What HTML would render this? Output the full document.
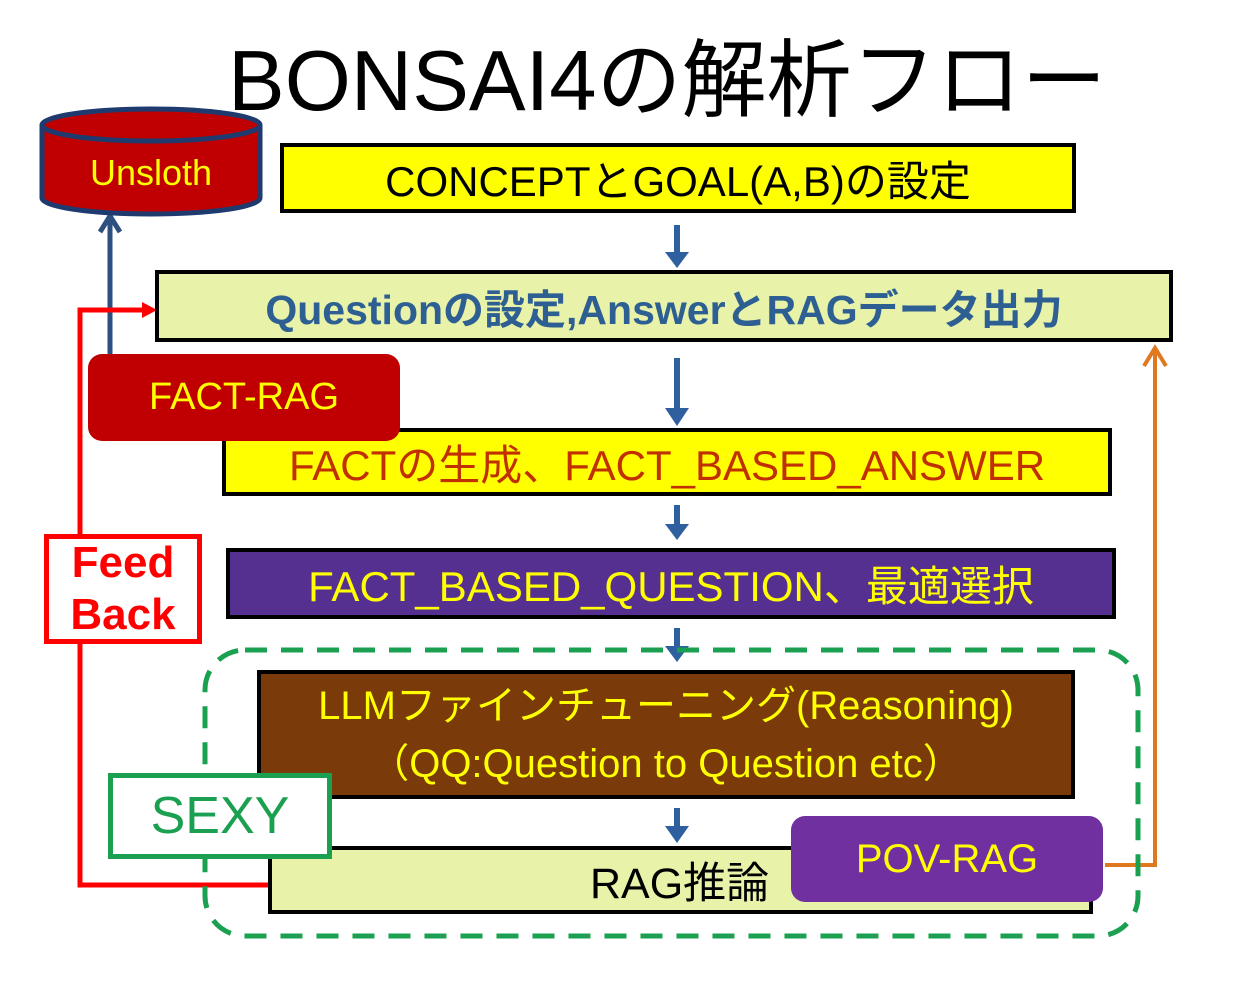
<!DOCTYPE html>
<html><head><meta charset="utf-8"><style>
body{margin:0;width:1256px;height:987px;background:#fff;position:relative;overflow:hidden;font-family:"Liberation Sans","Noto Sans CJK JP",sans-serif}
.a{position:absolute;box-sizing:border-box;display:flex;align-items:center;justify-content:center;white-space:nowrap}
</style></head><body>
<svg width="1256" height="987" style="position:absolute;left:0;top:0">
<g stroke="#2e5f9e" stroke-width="6" fill="#2e5f9e">
<line x1="677" y1="225" x2="677" y2="255"/><polygon points="665,252 689,252 677,268" stroke="none"/>
<line x1="677" y1="358" x2="677" y2="410"/><polygon points="665,408 689,408 677,426" stroke="none"/>
<line x1="677" y1="505" x2="677" y2="526"/><polygon points="665,524 689,524 677,540" stroke="none"/>
<line x1="677" y1="628" x2="677" y2="648"/><polygon points="665,646 689,646 677,662" stroke="none"/>
<line x1="677" y1="808" x2="677" y2="828"/><polygon points="665,826 689,826 677,843" stroke="none"/>
</g>
<line x1="110" y1="356" x2="110" y2="216" stroke="#2e5080" stroke-width="5"/>
<polyline points="100,232 110,216 120,232" fill="none" stroke="#2e5080" stroke-width="5"/>
<polyline points="276,885 80,885 80,310 148,310" fill="none" stroke="#f00" stroke-width="5"/>
<polygon points="142,302 157,310 142,318" fill="#f00"/>
<polyline points="1105,865 1155,865 1155,352" fill="none" stroke="#e07820" stroke-width="4"/>
<polyline points="1144,366 1155,348 1166,366" fill="none" stroke="#e07820" stroke-width="4"/>
<path d="M42,125 L42,198 A109,16 0 0 0 260,198 L260,125" fill="#c00000" stroke="#1f3a6e" stroke-width="5"/>
<ellipse cx="151" cy="125" rx="109" ry="16" fill="#c00000" stroke="#1f3a6e" stroke-width="5"/>
</svg>
<div style="position:absolute;left:228px;top:32px;font-size:85px;line-height:100px;color:#000">BONSAI4の解析フロー</div>
<div class="a" style="left:42px;top:150px;width:218px;height:46px;color:#ffff00;font-size:36px">Unsloth</div>
<div class="a" style="left:280px;top:143px;width:796px;height:70px;background:#ffff00;border:4px solid #000;font-size:42px">CONCEPTとGOAL(A,B)の設定</div>
<div class="a" style="left:155px;top:270px;width:1018px;height:72px;background:#e8f2a8;border:4px solid #000;font-size:41px;color:#2e5f93;font-weight:bold">Questionの設定,AnswerとRAGデータ出力</div>
<div class="a" style="left:222px;top:428px;width:890px;height:68px;background:#ffff00;border:4px solid #000;font-size:42px;color:#c03000">FACTの生成、FACT_BASED_ANSWER</div>
<div class="a" style="left:88px;top:354px;width:312px;height:87px;background:#c00000;border-radius:14px;color:#ffff00;font-size:38px">FACT-RAG</div>
<div class="a" style="left:226px;top:548px;width:890px;height:71px;background:#553090;border:4px solid #000;font-size:42px;color:#ffff00">FACT_BASED_QUESTION、最適選択</div>
<div class="a" style="left:44px;top:534px;width:158px;height:110px;border:5px solid #f00;background:#fff;color:#f00;font-weight:bold;font-size:44px;line-height:52px;text-align:center;white-space:normal">Feed Back</div>
<svg width="1256" height="987" style="position:absolute;left:0;top:0"><rect x="205" y="650" width="933" height="286" rx="40" fill="none" stroke="#1aa050" stroke-width="5" stroke-dasharray="22 14"/></svg>
<div class="a" style="left:257px;top:670px;width:818px;height:129px;background:#7b3a0a;border:4px solid #000;color:#ffff00;font-size:40px;flex-direction:column;line-height:58px"><div>LLMファインチューニング(Reasoning)</div><div>（QQ:Question to Question etc）</div></div>
<div class="a" style="left:268px;top:846px;width:825px;height:68px;background:#e8f2a8;border:4px solid #000;font-size:43px"><span style="position:absolute;left:318px">RAG推論</span></div>
<div class="a" style="left:108px;top:773px;width:224px;height:86px;background:#fff;border:5px solid #1aa050;color:#1aa050;font-size:52px">SEXY</div>
<div class="a" style="left:791px;top:816px;width:312px;height:86px;background:#7030a0;border-radius:14px;color:#ffff00;font-size:40px">POV-RAG</div>
</body></html>
